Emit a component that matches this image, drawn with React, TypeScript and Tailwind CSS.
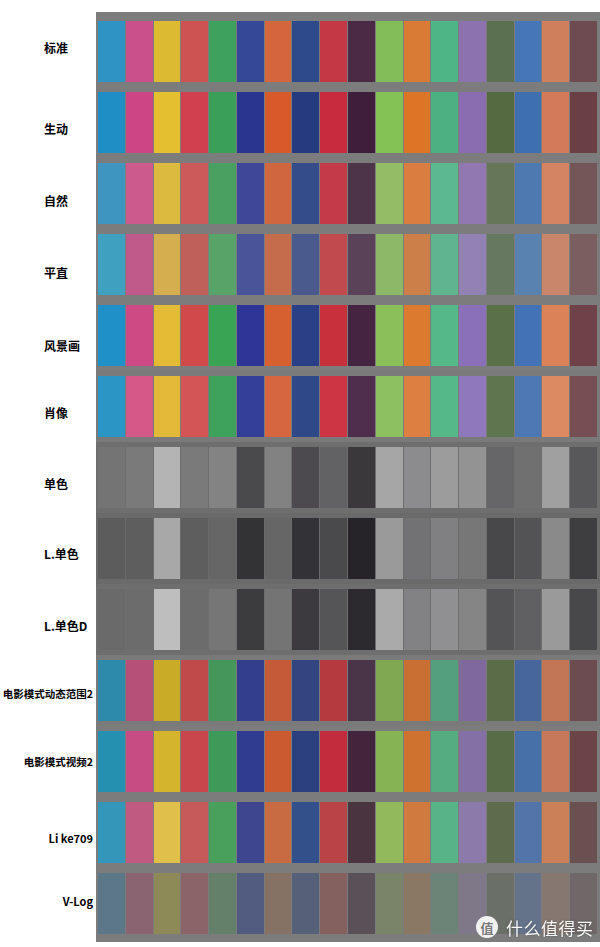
import React from 'react';

type Row = {
  label: string;
  align: 'left' | 'right';
  size: string;
  shift: string;
  band: string;
  colors: string[];
};

const rows: Row[] = [
  {
    label: '标准', align: 'left', size: 'text-[12px]', shift: 'pb-[8px]', band: 'bg-[#7c7c7c]',
    colors: ['#2f93c4', '#c9508a', '#dcbb33', '#cd5252', '#3ea15d', '#354797', '#d4663d', '#2f4a8a', '#c33844', '#4a2a45', '#82bd5a', '#d97a35', '#4db586', '#8d72b0', '#5b7050', '#4676b5', '#cf7f5c', '#6e4b50'],
  },
  {
    label: '生动', align: 'left', size: 'text-[12px]', shift: 'pt-[12px]', band: 'bg-[#7c7c7c]',
    colors: ['#1e8ec4', '#cd4585', '#e4c030', '#d1404f', '#3a9f58', '#2a3590', '#d85a2a', '#263a80', '#c82a3e', '#3e1e3a', '#84c256', '#dc7526', '#4cb082', '#8a6cb0', '#556a40', '#3e70b0', '#d37a58', '#6a4045'],
  },
  {
    label: '自然', align: 'left', size: 'text-[12px]', shift: 'pt-[14px]', band: 'bg-[#7c7c7c]',
    colors: ['#3d95c0', '#cc5a8c', '#dcba40', '#cd5a5a', '#4aa060', '#3f4898', '#d0663f', '#344c8a', '#c33a48', '#4e3448', '#92bc66', '#d97e40', '#5cb88e', '#9178b0', '#657758', '#4e78b0', '#d48462', '#745558'],
  },
  {
    label: '平直', align: 'left', size: 'text-[12px]', shift: 'pt-[16px]', band: 'bg-[#7c7c7c]',
    colors: ['#3fa0c0', '#c05a8a', '#d5ae50', '#c0605a', '#58a468', '#4a5498', '#c46c4c', '#4a5a8c', '#c04a4e', '#5a4358', '#8cb868', '#cc7f48', '#60b48e', '#9282b4', '#677860', '#5a82b0', '#c9866a', '#7a5e60'],
  },
  {
    label: '风景画', align: 'left', size: 'text-[12px]', shift: 'pt-[20px]', band: 'bg-[#7c7c7c]',
    colors: ['#2090c8', '#ce4a85', '#e3bb35', '#d04a4a', '#3aa455', '#2e3596', '#d66030', '#2a3f85', '#c8303c', '#442440', '#8abf5a', '#dc7a30', '#54b888', '#8a70b8', '#5a7048', '#4472b6', '#dc8258', '#6e4248'],
  },
  {
    label: '肖像', align: 'left', size: 'text-[12px]', shift: 'pt-[12px]', band: 'bg-[#7a7a7a]',
    colors: ['#2b95c5', '#d45888', '#e3b93a', '#d45555', '#3ea25c', '#333f98', '#d66640', '#2e4888', '#cd3545', '#4f2d4c', '#8cc060', '#dc7f40', '#54b888', '#8f78bc', '#5e7550', '#4e78b4', '#dc8a62', '#784e55'],
  },
  {
    label: '单色', align: 'left', size: 'text-[12px]', shift: 'pt-[12px]', band: 'bg-[#6e6e6e]',
    colors: ['#747474', '#7a7a7a', '#b4b4b4', '#7a7a7a', '#838383', '#4a4a4c', '#828282', '#4c4a4e', '#626264', '#3a383a', '#a6a6a6', '#8c8c8e', '#9c9c9c', '#939393', '#666668', '#707070', '#a0a0a0', '#58585a'],
  },
  {
    label: 'L.单色', align: 'left', size: 'text-[12px]', shift: 'pt-[10px]', band: 'bg-[#6a6a6a]',
    colors: ['#5c5c5c', '#5e5e5e', '#a8a8a8', '#5e5e5e', '#666666', '#333235', '#666666', '#333236', '#4a4a4c', '#262428', '#9a9a9a', '#727274', '#808082', '#777778', '#48474a', '#535355', '#8a8a8a', '#3e3d40'],
  },
  {
    label: 'L.单色D', align: 'left', size: 'text-[12px]', shift: 'pt-[12px]', band: 'bg-[#6e6e6e]',
    colors: ['#6a6a6a', '#6c6c6c', '#bebebe', '#6c6c6c', '#767676', '#3c3b3e', '#747474', '#3c3a3e', '#555557', '#2c2a2e', '#aaaaaa', '#828284', '#909092', '#858586', '#545456', '#606062', '#9a9a9a', '#48474a'],
  },
  {
    label: '电影模式动态范围2', align: 'right', size: 'text-[10.5px]', shift: 'pt-[8px]', band: 'bg-[#7a7a7a]',
    colors: ['#2d8aaa', '#b75078', '#c9ab28', '#c04a4a', '#45965a', '#343f8c', '#c55a38', '#324580', '#b53a40', '#4a3448', '#7ea852', '#c87034', '#54a07c', '#7e689c', '#5a6c48', '#46669c', '#c27656', '#6c4c50'],
  },
  {
    label: '电影模式视频2', align: 'right', size: 'text-[10.5px]', shift: 'pt-[2px]', band: 'bg-[#7c7c7c]',
    colors: ['#2690b0', '#c84c84', '#d4b42c', '#c8464c', '#3e9a58', '#303c90', '#cc5a30', '#2c4080', '#c22c3c', '#42243c', '#86b454', '#cf7230', '#54ac80', '#8470a4', '#586c48', '#4870a8', '#c8785a', '#6c4448'],
  },
  {
    label: 'Li ke709', align: 'right', size: 'text-[11px]', shift: 'pt-[12px]', band: 'bg-[#7c7c7c]',
    colors: ['#3496b8', '#c05a80', '#e0c04a', '#c65a5a', '#48a05c', '#3e4690', '#c86a42', '#34508a', '#b84448', '#4a3440', '#92ba5c', '#d07a40', '#58b488', '#8c7aaa', '#5e6c4e', '#5274a8', '#cc8058', '#6a5050'],
  },
  {
    label: 'V-Log', align: 'right', size: 'text-[11px]', shift: 'pb-[4px]', band: 'bg-[#7c7c7c]',
    colors: ['#5c7888', '#8a6470', '#8e8a58', '#8a6466', '#64806a', '#525c80', '#867264', '#566078', '#84605e', '#5a5058', '#7a8468', '#8a7864', '#6c8478', '#7e7888', '#6a7068', '#64728a', '#867870', '#706868'],
  },
];

const App: React.FC = () => {
  return (
    <div className="relative w-[600px] h-[947px] bg-white font-['Noto_Sans_CJK_SC','Noto_Sans',sans-serif] text-black">
      <div className="flex flex-col pt-[12px]">
        {/* top edge of the chart */}
        <div className="flex h-[4px]">
          <div className="w-[96px] shrink-0" />
          <div className="flex-1 bg-[#7c7c7c]" />
        </div>

        {rows.map((row) => (
          <div key={row.label} className="flex h-[71px]">
            <div
              className={
                row.align === 'left'
                  ? `w-[96px] shrink-0 flex items-center pl-[44px] ${row.shift}`
                  : `w-[96px] shrink-0 flex items-center justify-end pr-[3px] ${row.shift}`
              }
            >
              <span className={`${row.size} font-bold leading-none whitespace-nowrap`}>{row.label}</span>
            </div>
            <div className={`flex-1 ${row.band} pl-[2px] pr-[3px] py-[5px]`}>
              <div className="grid h-full grid-cols-[repeat(18,minmax(0,1fr))] gap-x-px">
                {row.colors.map((c, i) => (
                  <div key={i} className="h-full" style={{ backgroundColor: c }} />
                ))}
              </div>
            </div>
          </div>
        ))}

        <div className="flex h-[3px]">
          <div className="w-[96px] shrink-0" />
          <div className="flex-1 bg-[#7c7c7c]" />
        </div>
      </div>

      {/* watermark */}
      <div className="absolute left-[476px] top-[916px] flex items-center gap-[8px] text-white/95">
        <div className="flex h-[22px] w-[22px] items-center justify-center rounded-full bg-white/90">
          <span className="text-[13px] font-bold leading-none text-[#7a7a7a]">值</span>
        </div>
        <span className="text-[17px] leading-none tracking-[0.5px] drop-shadow-[0_0_1px_rgba(0,0,0,0.3)]">什么值得买</span>
      </div>
    </div>
  );
};

export default App;
